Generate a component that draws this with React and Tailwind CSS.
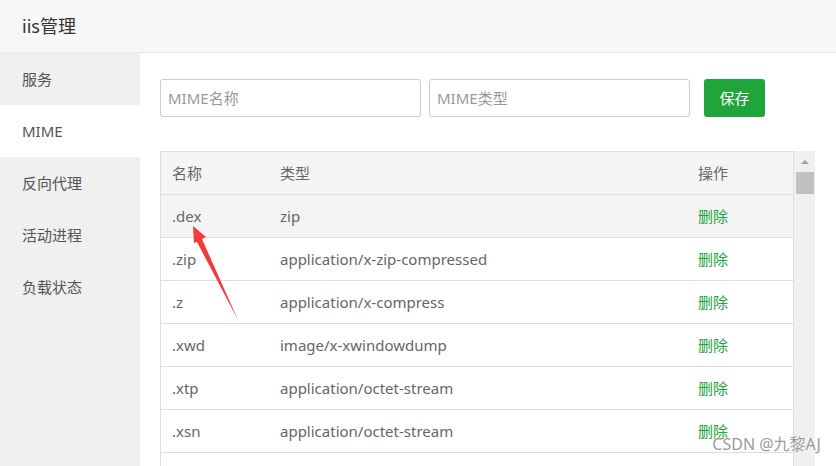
import React from 'react';

const menu = ['服务', 'MIME', '反向代理', '活动进程', '负载状态'];

const rows = [
  ['.dex', 'zip'],
  ['.zip', 'application/x-zip-compressed'],
  ['.z', 'application/x-compress'],
  ['.xwd', 'image/x-xwindowdump'],
  ['.xtp', 'application/octet-stream'],
  ['.xsn', 'application/octet-stream'],
  ['.xsf', 'text/xml'],
];

export default function App() {
  return (
    <div className="relative w-[836px] h-[466px] overflow-hidden bg-white text-[#666] font-['Noto_Sans','Noto_Sans_CJK_SC',sans-serif]">
      {/* Title bar */}
      <div className="h-[53px] bg-[#f7f7f7] border-b border-[#eaeaea] flex items-center pl-[22px] text-[18px] text-[#333]">
        iis管理
      </div>

      <div className="flex h-[413px]">
        {/* Sidebar */}
        <div className="w-[140px] shrink-0 bg-[#f0f0f0] flex flex-col">
          {menu.map((m) => (
            <div
              key={m}
              className={`h-[52px] flex items-center pl-[22px] text-[15px] text-[#555] ${m === 'MIME' ? 'bg-white' : ''}`}
            >
              {m}
            </div>
          ))}
        </div>

        {/* Content */}
        <div className="flex-1 pl-[20px] pr-[21px] pt-[26px]">
          <div className="flex items-center">
            <input
              placeholder="MIME名称"
              className="w-[261px] h-[38px] border border-[#ccc] rounded-[3px] px-[7px] text-[15px] placeholder:text-[#999] outline-none"
            />
            <input
              placeholder="MIME类型"
              className="ml-[8px] w-[261px] h-[38px] border border-[#ccc] rounded-[3px] px-[7px] text-[15px] placeholder:text-[#999] outline-none"
            />
            <button className="ml-[14px] w-[61px] h-[38px] rounded-[3px] bg-[#20a53a] text-white text-[15px]">
              保存
            </button>
          </div>

          {/* Table + scrollbar */}
          <div className="mt-[34px] flex">
            <div className="w-[634px] border-l border-r border-t border-[#ddd]">
              <div className="flex h-[43px] items-center bg-[#f5f5f5] border-b border-[#ddd] text-[15px]">
                <div className="w-[119px] pl-[11px]">名称</div>
                <div className="w-[418px]">类型</div>
                <div>操作</div>
              </div>
              {rows.map(([n, t], i) => (
                <div
                  key={n}
                  className={`flex h-[43px] items-center border-b border-[#ddd] text-[15px] ${i === 0 ? 'bg-[#f4f4f4]' : ''}`}
                >
                  <div className="w-[119px] pl-[11px]">{n}</div>
                  <div className="w-[418px]">{t}</div>
                  <div className="text-[#20a53a]">删除</div>
                </div>
              ))}
            </div>
            <div className="w-[21px] bg-[#f0f0f0] flex flex-col items-center pt-[9px]">
              <div className="w-0 h-0 border-l-[4px] border-r-[4px] border-b-[4px] border-l-transparent border-r-transparent border-b-[#a3a3a3]" />
              <div className="mt-[8px] w-[18px] h-[22px] bg-[#c1c1c1]" />
            </div>
          </div>
        </div>
      </div>

      {/* Annotation arrow */}
      <svg className="absolute left-0 top-0 pointer-events-none" width="836" height="466">
        <polygon
          points="193,226 206,237 202,239 238,320 197,242 194,243"
          fill="#f23a3a"
        />
      </svg>

      {/* Watermark */}
      <div className="absolute right-[15px] top-[432px] text-[16px] text-[#9a9a9a] whitespace-nowrap [text-shadow:0_0_2px_#fff]">
        CSDN @九黎AJ
      </div>
    </div>
  );
}
